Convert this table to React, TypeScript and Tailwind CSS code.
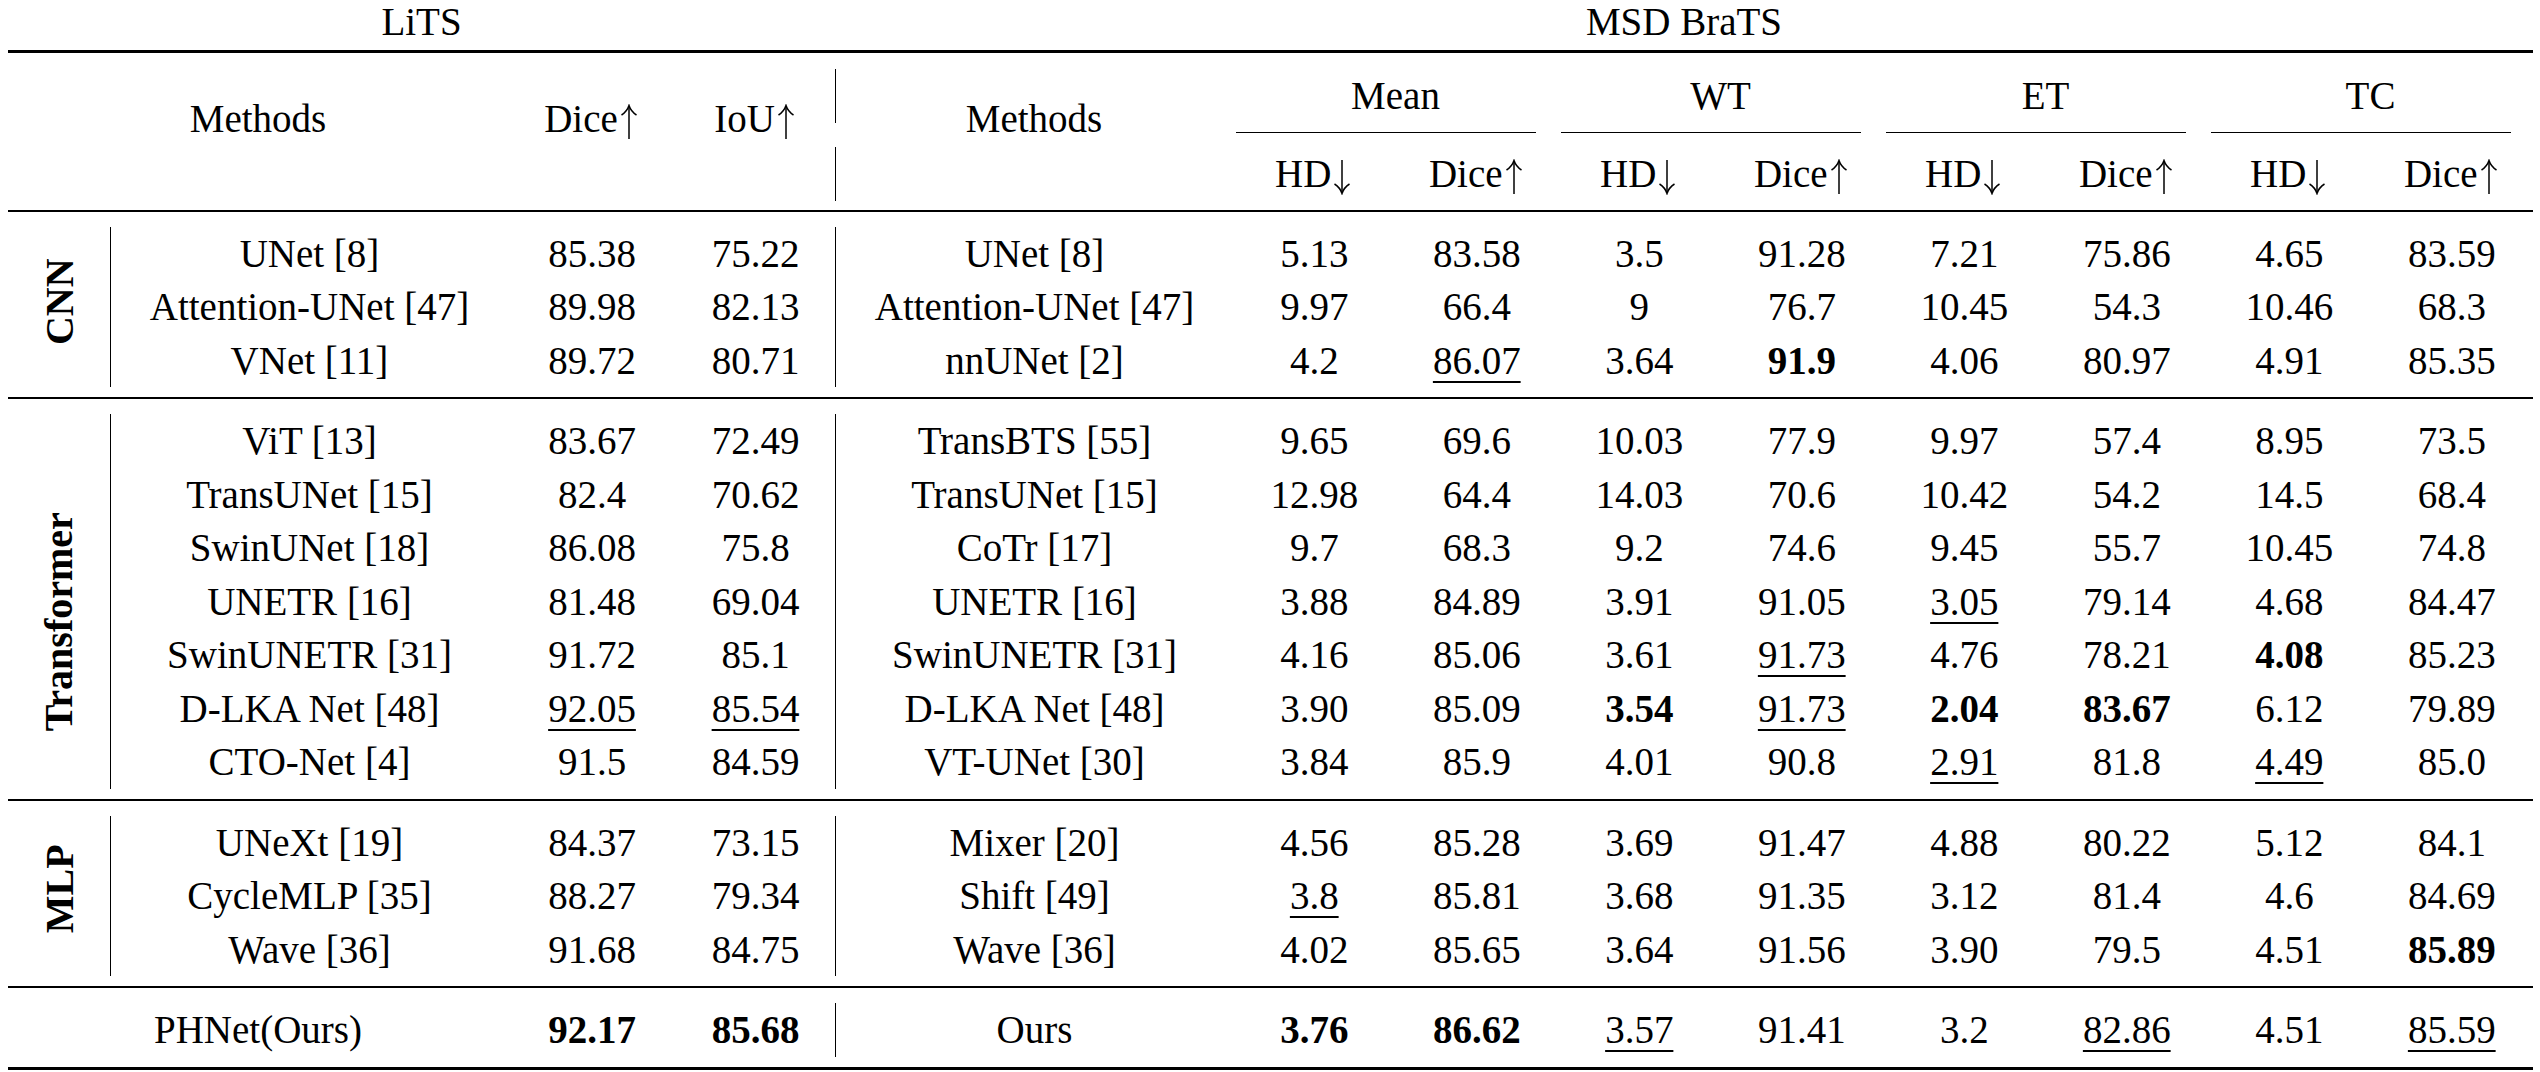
import React from 'react';

type Section = { label: string; rows: string[][]; shift: string };

const cols =
  'grid grid-cols-[102px_398px_168px_159px_398px_repeat(8,162.5px)]';

const sections: Section[] = [
  {
    label: 'CNN',
    shift: 'pb-[10px]',
    rows: [
      ['UNet [8]', '85.38', '75.22', 'UNet [8]', '5.13', '83.58', '3.5', '91.28', '7.21', '75.86', '4.65', '83.59'],
      ['Attention-UNet [47]', '89.98', '82.13', 'Attention-UNet [47]', '9.97', '66.4', '9', '76.7', '10.45', '54.3', '10.46', '68.3'],
      ['VNet [11]', '89.72', '80.71', 'nnUNet [2]', '4.2', '__86.07', '3.64', '**91.9', '4.06', '80.97', '4.91', '85.35'],
    ],
  },
  {
    label: 'Transformer',
    shift: 'pt-[40px]',
    rows: [
      ['ViT [13]', '83.67', '72.49', 'TransBTS [55]', '9.65', '69.6', '10.03', '77.9', '9.97', '57.4', '8.95', '73.5'],
      ['TransUNet [15]', '82.4', '70.62', 'TransUNet [15]', '12.98', '64.4', '14.03', '70.6', '10.42', '54.2', '14.5', '68.4'],
      ['SwinUNet [18]', '86.08', '75.8', 'CoTr [17]', '9.7', '68.3', '9.2', '74.6', '9.45', '55.7', '10.45', '74.8'],
      ['UNETR [16]', '81.48', '69.04', 'UNETR [16]', '3.88', '84.89', '3.91', '91.05', '__3.05', '79.14', '4.68', '84.47'],
      ['SwinUNETR [31]', '91.72', '85.1', 'SwinUNETR [31]', '4.16', '85.06', '3.61', '__91.73', '4.76', '78.21', '**4.08', '85.23'],
      ['D-LKA Net [48]', '__92.05', '__85.54', 'D-LKA Net [48]', '3.90', '85.09', '**3.54', '__91.73', '**2.04', '**83.67', '6.12', '79.89'],
      ['CTO-Net [4]', '91.5', '84.59', 'VT-UNet [30]', '3.84', '85.9', '4.01', '90.8', '__2.91', '81.8', '__4.49', '85.0'],
    ],
  },
  {
    label: 'MLP',
    shift: 'pb-[14px]',
    rows: [
      ['UNeXt [19]', '84.37', '73.15', 'Mixer [20]', '4.56', '85.28', '3.69', '91.47', '4.88', '80.22', '5.12', '84.1'],
      ['CycleMLP [35]', '88.27', '79.34', 'Shift [49]', '__3.8', '85.81', '3.68', '91.35', '3.12', '81.4', '4.6', '84.69'],
      ['Wave [36]', '91.68', '84.75', 'Wave [36]', '4.02', '85.65', '3.64', '91.56', '3.90', '79.5', '4.51', '**85.89'],
    ],
  },
];

const ours = ['PHNet(Ours)', '**92.17', '**85.68', 'Ours', '**3.76', '**86.62', '__3.57', '91.41', '3.2', '__82.86', '4.51', '__85.59'];

const groups = ['Mean', 'WT', 'ET', 'TC'];
const spanStart = ['col-start-6', 'col-start-8', 'col-start-10', 'col-start-12'];
const diceStart = ['col-start-7', 'col-start-9', 'col-start-11', 'col-start-13'];

// thin math-style arrow, like \uparrow / \downarrow
function Arrow({ down }: { down?: boolean }) {
  return (
    <svg
      width="22"
      height="36"
      viewBox="0 0 22 36"
      className="inline-block align-[-8px]"
      fill="none"
      stroke="black"
      strokeWidth="1.5"
    >
      {down ? (
        <>
          <path d="M11 1 V34" />
          <path d="M3.5 25 Q9 28.5 11 34.5 Q13 28.5 18.5 25" />
        </>
      ) : (
        <>
          <path d="M11 2 V35" />
          <path d="M3.5 11 Q9 7.5 11 1.5 Q13 7.5 18.5 11" />
        </>
      )}
    </svg>
  );
}

function Val({ v }: { v: string }) {
  if (v.startsWith('**')) return <span className="font-bold">{v.slice(2)}</span>;
  if (v.startsWith('__'))
    return (
      <span className="underline underline-offset-[7px] decoration-[length:1.5px]">{v.slice(2)}</span>
    );
  return <span>{v}</span>;
}

function Cell({ v, line }: { v: string; line?: boolean }) {
  return (
    <div
      className={
        line
          ? 'flex justify-center whitespace-nowrap border-l-[1.5px] border-black'
          : 'flex justify-center whitespace-nowrap'
      }
    >
      <Val v={v} />
    </div>
  );
}

function Rule({ h }: { h: string }) {
  return <div className={`${h} bg-black`} />;
}

export default function App() {
  return (
    <div className="w-[2540px] h-[1072px] bg-white text-black font-['Liberation_Serif','Times_New_Roman',serif] text-[39px] leading-[53.5px] overflow-hidden">
      <div className="ml-[8px] w-[2525px]">
        {/* dataset titles */}
        <div className={`${cols} h-[50px] leading-[44px]`}>
          <div className="col-span-4 text-center">LiTS</div>
          <div className="col-span-9 text-center">MSD BraTS</div>
        </div>
        <Rule h="h-[3px]" />

        {/* header */}
        <div className={`${cols} grid-rows-[16px_53.5px_9px_1.2px_14.8px_53.5px_9px]`}>
          <div className="col-start-1 col-span-2 row-start-1 row-span-7 pt-[39px] text-center">Methods</div>
          <div className="col-start-3 row-start-1 row-span-7 pt-[39px] text-center whitespace-nowrap">
            Dice<Arrow />
          </div>
          <div className="col-start-4 row-start-1 row-span-7 pt-[39px] text-center whitespace-nowrap">
            IoU<Arrow />
          </div>
          <div className="col-start-5 row-start-1 row-span-7 pt-[39px] text-center">Methods</div>
          <div className="col-start-5 row-start-2 border-l-[1.5px] border-black" />
          <div className="col-start-5 row-start-6 border-l-[1.5px] border-black" />
          {groups.map((g, i) => (
            <React.Fragment key={g}>
              <div className={`${spanStart[i]} col-span-2 row-start-2 text-center`}>{g}</div>
              <div className={`${spanStart[i]} col-span-2 row-start-4 pl-[3px] pr-[22px]`}>
                <div className="h-full bg-black" />
              </div>
              <div className={`${spanStart[i]} row-start-6 text-center whitespace-nowrap`}>
                HD<Arrow down />
              </div>
              <div className={`${diceStart[i]} row-start-6 text-center whitespace-nowrap`}>
                Dice<Arrow />
              </div>
            </React.Fragment>
          ))}
        </div>
        <Rule h="h-[2px]" />

        {sections.map(s => (
          <React.Fragment key={s.label}>
            <div className="pt-[15px] pb-[10px]">
              <div className={`${cols} auto-rows-[53.5px]`}>
                <div
                  className={
                    (s.rows.length === 3 ? 'row-span-3' : 'row-span-7') +
                    ' flex items-center justify-center ' +
                    s.shift
                  }
                >
                  <span className="-rotate-90 whitespace-nowrap font-bold text-[40px]">{s.label}</span>
                </div>
                {s.rows.map((r, ri) => (
                  <React.Fragment key={ri}>
                    {r.map((v, ci) => (
                      <Cell key={ci} v={v} line={ci === 0 || ci === 3} />
                    ))}
                  </React.Fragment>
                ))}
              </div>
            </div>
            <Rule h="h-[2px]" />
          </React.Fragment>
        ))}

        {/* ours */}
        <div className="pt-[15px] pb-[10px]">
          <div className={`${cols} auto-rows-[53.5px]`}>
            <div className="col-span-2 flex justify-center">{ours[0]}</div>
            {ours.slice(1).map((v, ci) => (
              <Cell key={ci} v={v} line={ci === 2} />
            ))}
          </div>
        </div>
        <Rule h="h-[3px]" />
      </div>
    </div>
  );
}
